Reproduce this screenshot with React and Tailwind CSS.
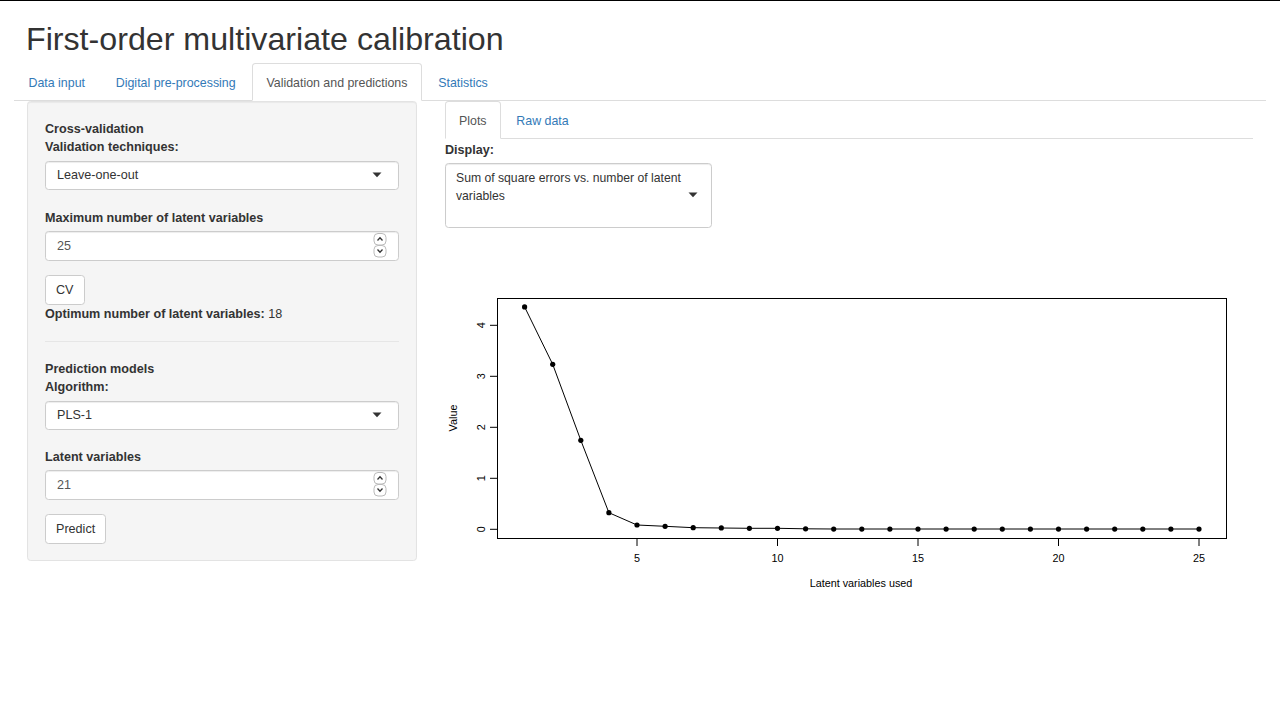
import React from "react";

const FONT = { fontFamily: '"Liberation Sans", Arial, Helvetica, sans-serif' };

const SSE = [
  4.36, 3.235, 1.745, 0.326, 0.084, 0.058, 0.032, 0.026, 0.02, 0.02, 0.01,
  0.005, 0.005, 0.005, 0.005, 0.005, 0.005, 0.005, 0.005, 0.005, 0.005, 0.005,
  0.005, 0.005, 0.005,
];

const xOf = (n) => 79.6 + (n - 1) * 28.1;
const yOf = (v) => 288.3 - 51 * v;

function Caret() {
  return (
    <svg width="10" height="6" viewBox="0 0 10 6" className="shrink-0">
      <path d="M0.5 0.5 L9.5 0.5 L5 5.2 Z" fill="#333" />
    </svg>
  );
}

function Spinner() {
  return (
    <svg width="14" height="25" viewBox="0 0 14 25" className="shrink-0">
      <rect x="1" y="0.5" width="12" height="11.5" rx="4" fill="#fff" stroke="#bbb" />
      <rect x="1" y="12.5" width="12" height="11.5" rx="4" fill="#fff" stroke="#bbb" />
      <path d="M4.5 7.5 L7 4.8 L9.5 7.5" fill="none" stroke="#333" strokeWidth="1.3" />
      <path d="M4.5 16.5 L7 19.2 L9.5 16.5" fill="none" stroke="#333" strokeWidth="1.3" />
    </svg>
  );
}

function SelectBox({ value }) {
  return (
    <div className="flex h-[29px] items-center justify-between rounded-[3.6px] border border-[#ccc] bg-white pl-[11px] pr-[16px] shadow-[inset_0_1px_1px_rgba(0,0,0,0.075)]">
      <span className="text-[12.6px] text-[#333]">{value}</span>
      <Caret />
    </div>
  );
}

function NumberBox({ value }) {
  return (
    <div className="flex h-[30px] items-center justify-between rounded-[3.6px] border border-[#ccc] bg-white pl-[11px] pr-[11px] shadow-[inset_0_1px_1px_rgba(0,0,0,0.075)]">
      <span className="text-[12.6px] text-[#555]">{value}</span>
      <Spinner />
    </div>
  );
}

function Button({ children }) {
  return (
    <button className="h-[30px] rounded-[3.6px] border border-[#ccc] bg-white px-[10px] text-[12.6px] text-[#333]">
      {children}
    </button>
  );
}

function Plot() {
  const pts = SSE.map((v, i) => [xOf(i + 1), yOf(v)]);
  const line = pts.map(([x, y], i) => `${i ? "L" : "M"}${x.toFixed(1)} ${y.toFixed(1)}`).join(" ");
  return (
    <svg width="808" height="400" viewBox="0 0 808 400" className="mt-[13px] block" style={FONT}>
      <rect x="52.5" y="57.5" width="729" height="240" fill="none" stroke="#000" strokeWidth="1" />
      {[0, 1, 2, 3, 4].map((v) => (
        <g key={v}>
          <line x1="45" x2="52.5" y1={yOf(v)} y2={yOf(v)} stroke="#000" />
          <text
            transform={`translate(36 ${yOf(v)}) rotate(-90)`}
            textAnchor="middle"
            dominantBaseline="central"
            fontSize="10.8"
          >
            {v}
          </text>
        </g>
      ))}
      {[5, 10, 15, 20, 25].map((n) => (
        <g key={n}>
          <line x1={xOf(n)} x2={xOf(n)} y1="297.5" y2="305" stroke="#000" />
          <text x={xOf(n)} y="321" textAnchor="middle" fontSize="10.8">
            {n}
          </text>
        </g>
      ))}
      <text transform="translate(8 177) rotate(-90)" textAnchor="middle" dominantBaseline="central" fontSize="10.8">
        Value
      </text>
      <text x="416" y="346" textAnchor="middle" fontSize="10.8">
        Latent variables used
      </text>
      <path d={line} fill="none" stroke="#000" strokeWidth="1" />
      {pts.map(([x, y], i) => (
        <circle key={i} cx={x} cy={y} r="2.6" fill="#000" />
      ))}
    </svg>
  );
}

export default function App() {
  const tabs = ["Data input", "Digital pre-processing", "Validation and predictions", "Statistics"];
  return (
    <div className="min-h-[720px] border-t border-black bg-white text-[12.6px] leading-[18px] text-[#333]" style={FONT}>
      <div className="px-[14px]">
        <h1 className="mt-[21px] mb-[5px] pl-[12px] text-[32.2px] leading-[35.6px] font-normal text-[#333]">
          First-order multivariate calibration
        </h1>

        <ul className="flex border-b border-[#ddd] text-[12.4px]">
          {tabs.map((t, i) => {
            const active = i === 2;
            return (
              <li key={t} className="-mb-px mr-[1.8px]">
                <span
                  className={`block rounded-t-[3.6px] border px-[13.5px] pt-[10px] pb-[8px] leading-[18px] ${
                    active
                      ? "border-[#ddd] border-b-transparent bg-white text-[#555]"
                      : "border-transparent text-[#337ab7]"
                  }`}
                >
                  {t}
                </span>
              </li>
            );
          })}
        </ul>

        <div className="flex gap-[28px] pl-[13px] pr-[13px]">
          <div className="w-[390px] shrink-0 self-start rounded-[3.6px] border border-[#e3e3e3] bg-[#f5f5f5] px-[17px] pt-[18px] pb-[16px] shadow-[inset_0_1px_1px_rgba(0,0,0,0.05)]">
            <div className="font-bold">Cross-validation</div>
            <div className="font-bold">Validation techniques:</div>
            <div className="mt-[5px]">
              <SelectBox value="Leave-one-out" />
            </div>
            <div className="mt-[19px] font-bold">Maximum number of latent variables</div>
            <div className="mt-[4px]">
              <NumberBox value="25" />
            </div>
            <div className="mt-[14px]">
              <Button>CV</Button>
            </div>
            <div>
              <span className="font-bold">Optimum number of latent variables:</span> 18
            </div>
            <hr className="mt-[18px] mb-[18px] border-t border-[#e6e6e6]" />
            <div className="font-bold">Prediction models</div>
            <div className="font-bold">Algorithm:</div>
            <div className="mt-[5px]">
              <SelectBox value="PLS-1" />
            </div>
            <div className="mt-[18px] font-bold">Latent variables</div>
            <div className="mt-[4px]">
              <NumberBox value="21" />
            </div>
            <div className="mt-[14px]">
              <Button>Predict</Button>
            </div>
          </div>

          <div className="min-w-0 flex-1">
            <ul className="flex border-b border-[#ddd] text-[12.4px]">
              <li className="-mb-px mr-[1.8px]">
                <span className="block rounded-t-[3.6px] border border-[#ddd] border-b-transparent bg-white px-[13px] pt-[10px] pb-[8px] leading-[18px] text-[#555]">
                  Plots
                </span>
              </li>
              <li className="-mb-px">
                <span className="block border border-transparent px-[13px] pt-[10px] pb-[8px] leading-[18px] text-[#337ab7]">
                  Raw data
                </span>
              </li>
            </ul>
            <div className="mt-[2px] font-bold">Display:</div>
            <div className="mt-[4px] flex h-[65px] w-[267px] items-start justify-between rounded-[3.6px] border border-[#ccc] bg-white pt-[5px] pl-[10px] pr-[14px] shadow-[inset_0_1px_1px_rgba(0,0,0,0.075)]">
              <span className="w-[232px] shrink-0 text-[12.2px] text-[#333]">
                Sum of square errors vs. number of latent variables
              </span>
              <div className="mt-[23px]">
                <Caret />
              </div>
            </div>
            <Plot />
          </div>
        </div>
      </div>
    </div>
  );
}
